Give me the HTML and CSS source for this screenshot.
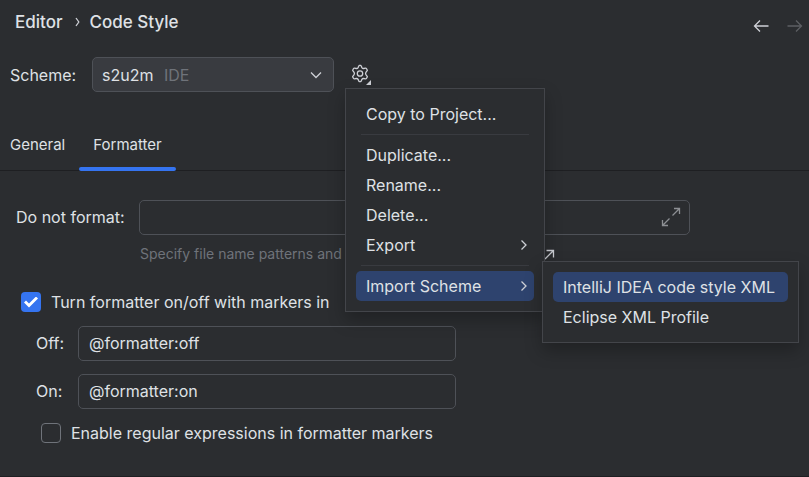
FILE: index.html
```html
<!DOCTYPE html>
<html lang="en">
<head>
<meta charset="utf-8">
<meta name="viewport" content="width=device-width, initial-scale=1">
<title>Code Style</title>
<link rel="stylesheet" href="styles.css">
</head>
<body>
<main class="page">
  <header class="header">
    <nav class="crumbs" aria-label="Breadcrumb">
      <a class="crumb" href="#">Editor</a>
      <svg class="crumb-sep" width="5" height="10" viewBox="0 0 5 10" aria-hidden="true"><path d="M1 1 3.8 5 1 9"/></svg>
      <a class="crumb" href="#">Code Style</a>
    </nav>
    <div class="history">
      <button class="icon-button" type="button" aria-label="Back">
        <svg width="16" height="14" viewBox="0 0 16 14"><path d="M15.5 7H1.500M7 1.500 1.500 7 7 12.500"/></svg>
      </button>
      <button class="icon-button" type="button" aria-label="Forward" disabled>
        <svg width="16" height="14" viewBox="0 0 16 14"><path d="M.5 7h14M9 1.500 14.500 7 9 12.500"/></svg>
      </button>
    </div>
  </header>

  <div class="scheme">
    <label class="scheme-label" for="scheme">Scheme:</label>
    <div class="combo">
      <select id="scheme" class="combo-select"><option>s2u2m</option></select>
      <span class="combo-note">IDE</span>
      <svg class="combo-arrow" width="12" height="8" viewBox="0 0 12 8" aria-hidden="true"><path d="M1 1.500 6 6.500 11 1.500"/></svg>
    </div>
    <div class="actions">
      <button class="icon-button gear" type="button" aria-label="Scheme actions" aria-expanded="true">
        <svg width="22" height="22" viewBox="0 0 22 22">
          <path d="M8.100 3.600 8.900 1.700Q9 1.400 9.400 1.400H10.600Q11 1.400 11.100 1.700L11.900 3.600Q12.500 4.600 13.700 4.500L15.700 4.200Q16.200 4.200 16.400 4.500L17.200 5.800Q17.500 6.200 17.200 6.600L15.900 8.300Q15.200 9.500 15.900 10.700L17.200 12.400Q17.500 12.800 17.200 13.200L16.400 14.500Q16.200 14.800 15.700 14.800L13.700 14.500Q12.500 14.400 11.900 15.400L11.100 17.300Q11 17.600 10.600 17.600H9.400Q9 17.600 8.900 17.300L8.100 15.400Q7.500 14.400 6.300 14.500L4.300 14.800Q3.800 14.800 3.600 14.500L2.800 13.200Q2.500 12.800 2.800 12.400L4.100 10.700Q4.800 9.500 4.100 8.300L2.800 6.600Q2.500 6.200 2.800 5.800L3.600 4.500Q3.800 4.200 4.300 4.200L6.300 4.500Q7.500 4.600 8.100 3.600Z"/>
          <circle cx="10" cy="9.500" r="2.700"/>
          <path class="solid" d="M21 16v5h-5z"/>
        </svg>
      </button>
      <ul class="menu" role="menu">
        <li><button class="item" type="button" role="menuitem">Copy to Project...</button></li>
        <li class="rule" role="separator"></li>
        <li><button class="item" type="button" role="menuitem">Duplicate...</button></li>
        <li><button class="item" type="button" role="menuitem">Rename...</button></li>
        <li><button class="item" type="button" role="menuitem">Delete...</button></li>
        <li><button class="item" type="button" role="menuitem">Export
          <svg width="8" height="12" viewBox="0 0 8 12" aria-hidden="true"><path d="M1.500 1.500 6 6 1.500 10.500"/></svg></button></li>
        <li class="rule" role="separator"></li>
        <li class="parent"><button class="item selected" type="button" role="menuitem" aria-expanded="true">Import Scheme
          <svg width="8" height="12" viewBox="0 0 8 12" aria-hidden="true"><path d="M1.500 1.500 6 6 1.500 10.500"/></svg></button>
          <ul class="menu submenu" role="menu">
            <li><button class="item selected" type="button" role="menuitem">IntelliJ IDEA code style XML</button></li>
            <li><button class="item" type="button" role="menuitem">Eclipse XML Profile</button></li>
          </ul>
        </li>
      </ul>
    </div>
  </div>

  <div class="tabs" role="tablist">
    <button class="tab" type="button" role="tab" aria-selected="false">General</button>
    <button class="tab" type="button" role="tab" aria-selected="true">Formatter</button>
  </div>

  <form class="form">
    <div class="exclude">
      <label class="exclude-label" for="exclude">Do not format:</label>
      <div class="exclude-field">
        <input id="exclude" class="text-input" type="text">
        <button class="icon-button expand" type="button" aria-label="Expand">
          <svg width="20" height="20" viewBox="0 0 20 20"><path d="M11.500 8.500 18 2M13 1.500h5.500v5.500M8.500 11.500 2 18M1.500 13v5.500h5.500"/></svg>
        </button>
      </div>
      <div class="hint">
        <span>Specify file name patterns and</span>
        <a href="#" aria-label="Learn more"><svg width="11" height="11" viewBox="0 0 11 11"><path d="M1 10 9.500 1.500M2.500 1.500h7v7"/></svg></a>
      </div>
    </div>

    <label class="check"><input type="checkbox" checked>Turn formatter on/off with markers in</label>

    <div class="markers">
      <label for="off">Off:</label>
      <input id="off" class="text-input" type="text" value="@formatter:off">
      <label for="on">On:</label>
      <input id="on" class="text-input" type="text" value="@formatter:on">
    </div>

    <label class="check nested"><input type="checkbox">Enable regular expressions in formatter markers</label>
  </form>
</main>
</body>
</html>
```
FILE: styles.css
```css
:root {
  --bg: #2b2d30;
  --text: #dfe1e5;
  --icon: #ced0d6;
  --border: #4e5157;
  --muted: #6f737a;
  --line: #1e1f22;
  --accent: #3574f0;
  --selection: #2e436e;
}

* {
  box-sizing: border-box;
}

body {
  margin: 0;
  background: var(--bg);
  color: var(--text);
  font: 16px/20px Inter, "Liberation Sans", sans-serif;
}

button,
input,
select {
  font: inherit;
  color: inherit;
}

svg {
  display: block;
  flex: none;
  fill: none;
  stroke: var(--icon);
  stroke-width: 1.3;
}

.page {
  min-height: 100vh;
  overflow: hidden;
  border-bottom: 1px solid var(--line);
}

.header {
  display: flex;
  justify-content: space-between;
  padding: 12px 6px 0 15px;
  height: 57px;
}

.crumbs {
  display: flex;
  align-items: center;
  gap: 12px;
  height: 20px;
}

.crumb {
  color: inherit;
  font-size: 17px;
  font-weight: 500;
  text-decoration: none;
}

.crumb:last-child {
  margin-left: -2px;
}

.history {
  display: flex;
  gap: 18px;
  height: 28px;
}

.icon-button {
  display: flex;
  align-items: center;
  padding: 0;
  border: 0;
  background: none;
}

.icon-button:disabled {
  opacity: 0.3;
}

.scheme {
  display: flex;
  align-items: center;
  padding-left: 10px;
}

.scheme-label {
  width: 82px;
}

.combo {
  position: relative;
  width: 242px;
}

.combo-select {
  display: block;
  width: 100%;
  height: 35px;
  padding: 0 32px 0 9px;
  appearance: none;
  border: 1px solid var(--border);
  border-radius: 5px;
  background: #393b40;
}

.combo-note {
  position: absolute;
  left: 72px;
  top: 8px;
  color: var(--muted);
  pointer-events: none;
}

.combo-arrow {
  position: absolute;
  right: 12px;
  top: 14px;
  pointer-events: none;
}

.actions {
  position: relative;
  margin-left: 16px;
}

.solid {
  fill: var(--icon);
  stroke: none;
}

.menu {
  position: absolute;
  z-index: 1;
  left: -5px;
  top: 24px;
  width: 200px;
  margin: 0;
  padding: 10px;
  border: 1px solid #43454a;
  background: var(--bg);
  box-shadow: 0 8px 16px rgba(0, 0, 0, 0.25);
  list-style: none;
}

.parent {
  position: relative;
}

.submenu {
  left: 186px;
  top: -10px;
  width: max-content;
  min-width: 257px;
}

.item {
  display: flex;
  align-items: center;
  justify-content: space-between;
  width: 100%;
  height: 30px;
  padding: 0 6px 0 10px;
  border: 0;
  border-radius: 5px;
  background: none;
  white-space: nowrap;
}

.submenu .item {
  padding: 0 10px;
}

.selected {
  background: var(--selection);
}

.rule {
  height: 1px;
  margin: 5px;
  background: #393b40;
}

.tabs {
  display: flex;
  margin-top: 28px;
  border-bottom: 1px solid var(--line);
}

.tab {
  height: 51px;
  margin-bottom: -1px;
  padding: 0 14px 2px;
  border: 0;
  background: none;
  font-size: 15px;
  position: relative;
}

.tab:first-child {
  padding-left: 10px;
}

.tab[aria-selected="true"]::after {
  content: "";
  position: absolute;
  left: 0;
  right: 0;
  bottom: 0;
  height: 4px;
  border-radius: 2px;
  background: var(--accent);
}

.form {
  padding: 29px 16px 0;
}

.exclude {
  display: grid;
  grid-template-columns: 123px minmax(0, 551px);
  align-items: center;
}

.exclude-field {
  position: relative;
}

.text-input {
  display: block;
  width: 100%;
  height: 35px;
  padding: 0 10px 2px;
  border: 1px solid var(--border);
  border-radius: 5px;
  background: var(--bg);
}

.exclude-label,
.markers label {
  padding-bottom: 2px;
}

.expand {
  position: absolute;
  right: 9px;
  top: 7px;
  opacity: 0.6;
}

.hint {
  grid-column: 2;
  display: flex;
  justify-content: space-between;
  align-items: center;
  max-width: 416px;
  margin-top: 9px;
  padding-left: 1px;
  color: var(--muted);
  font-size: 14px;
}

.check {
  display: flex;
  align-items: center;
  gap: 10px;
  margin: 28px 0 14px 5px;
}

.check input {
  display: grid;
  place-items: center;
  appearance: none;
  flex: none;
  width: 20px;
  height: 20px;
  margin: 0;
  border: 1px solid #6f737a;
  border-radius: 4px;
}

.check input:checked {
  border: 0;
  background: var(--accent);
}

.check input:checked::before {
  content: "";
  width: 14px;
  height: 11px;
  background: #fff;
  clip-path: polygon(0 6px, 2px 4px, 5px 7px, 12px 0, 14px 2px, 5px 11px);
}

.markers {
  display: grid;
  grid-template-columns: 42px minmax(0, 378px);
  align-items: center;
  row-gap: 13px;
  margin-left: 20px;
}

.nested {
  margin: 14px 0 0 25px;
}
```
